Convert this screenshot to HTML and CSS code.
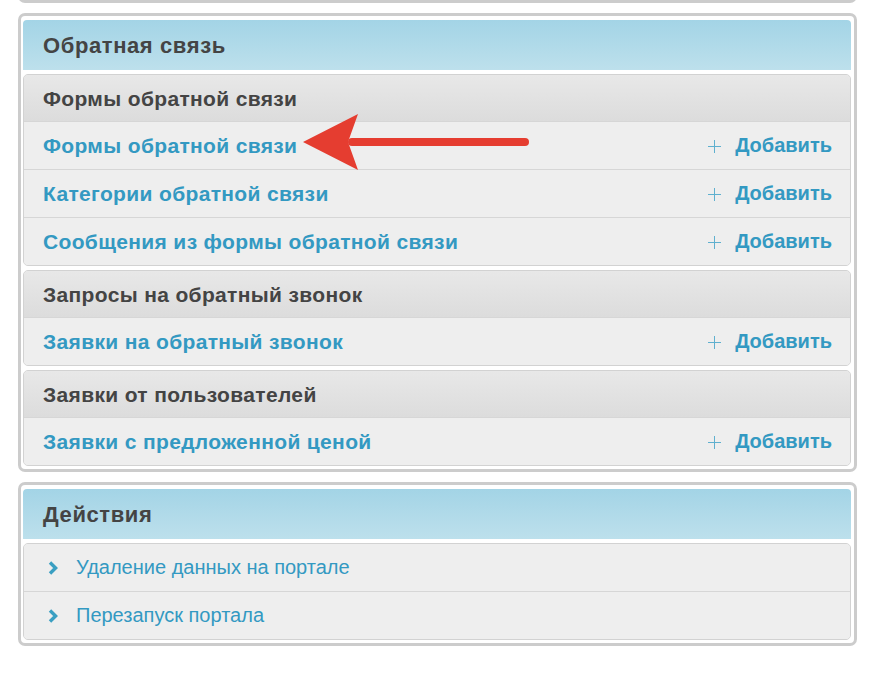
FILE: index.html
```html
<!DOCTYPE html>
<html lang="ru">
<head>
<meta charset="utf-8">
<title>Обратная связь</title>
<link rel="stylesheet" href="styles.css">
</head>
<body>
<div class="page">
  <div class="box box-prev"></div>

  <div class="box">
    <div class="box-title">Обратная связь</div>

    <div class="group">
      <div class="group-head">Формы обратной связи</div>
      <div class="row">
        <a class="row-link">Формы обратной связи</a>
        <a class="add"><span class="plus"></span>Добавить</a>
      </div>
      <div class="row">
        <a class="row-link">Категории обратной связи</a>
        <a class="add"><span class="plus"></span>Добавить</a>
      </div>
      <div class="row">
        <a class="row-link">Сообщения из формы обратной связи</a>
        <a class="add"><span class="plus"></span>Добавить</a>
      </div>
    </div>

    <div class="group">
      <div class="group-head">Запросы на обратный звонок</div>
      <div class="row">
        <a class="row-link">Заявки на обратный звонок</a>
        <a class="add"><span class="plus"></span>Добавить</a>
      </div>
    </div>

    <div class="group">
      <div class="group-head">Заявки от пользователей</div>
      <div class="row">
        <a class="row-link">Заявки с предложенной ценой</a>
        <a class="add"><span class="plus"></span>Добавить</a>
      </div>
    </div>
  </div>

  <div class="box">
    <div class="box-title">Действия</div>
    <div class="group">
      <div class="row action">
        <svg class="chev" width="10" height="14" viewBox="0 0 10 14"><path d="M2 1.5 L7.6 7 L2 12.5" fill="none" stroke="#3a9fc2" stroke-width="3.4"/></svg>
        <a class="action-link">Удаление данных на портале</a>
      </div>
      <div class="row action">
        <svg class="chev" width="10" height="14" viewBox="0 0 10 14"><path d="M2 1.5 L7.6 7 L2 12.5" fill="none" stroke="#3a9fc2" stroke-width="3.4"/></svg>
        <a class="action-link">Перезапуск портала</a>
      </div>
    </div>
  </div>

  <svg class="arrow" width="240" height="64" viewBox="0 0 240 64">
    <line x1="50" y1="30" x2="223" y2="30" stroke="#e53d30" stroke-width="8" stroke-linecap="round"/>
    <polygon points="1,30 56,2 46,30 56,58" fill="#e53d30"/>
  </svg>
</div>
</body>
</html>
```

FILE: styles.css
```css
html, body {
  margin: 0;
  padding: 0;
  background: #fff;
}

body {
  font-family: "Liberation Sans", Arial, sans-serif;
  color: #444;
}

.page {
  position: relative;
  padding: 3px 29px 40px 18px;
}

.box {
  border: 3px solid #cccccc;
  border-radius: 7px;
  padding: 4px 3px 3px 2px;
  margin-top: 10px;
  background: #fff;
}

.box-prev {
  height: 20px;
  margin-top: -26px;
  padding: 0;
}

.box-title {
  height: 50px;
  line-height: 52px;
  padding-left: 20px;
  font-size: 22px;
  letter-spacing: 0.6px;
  font-weight: bold;
  color: #444;
  border-radius: 4px 4px 0 0;
  background: linear-gradient(to bottom, #a3d4e6, #bde0ec);
}

.group {
  margin-top: 4px;
  border: 1px solid #d2d2d2;
  border-radius: 5px;
  background: #eeeeee;
  overflow: hidden;
}

.group-head {
  height: 46px;
  line-height: 48px;
  padding-left: 19px;
  font-size: 21px;
  letter-spacing: 0.35px;
  font-weight: bold;
  color: #444;
  background: linear-gradient(to bottom, #e8e8e8, #dcdcdc);
}

.row {
  height: 47px;
  border-top: 1px solid #d6d6d6;
  display: flex;
  align-items: center;
  padding: 0 18px 0 19px;
  background: #eeeeee;
}

.group > .row:first-child {
  border-top: none;
}

.row-link {
  flex: 1;
  font-size: 21px;
  letter-spacing: 0.35px;
  font-weight: bold;
  color: #3399c2;
}

.add {
  display: flex;
  align-items: center;
  font-size: 20px;
  font-weight: bold;
  color: #3399c2;
}

.plus {
  position: relative;
  width: 13px;
  height: 13px;
  margin-right: 14px;
  margin-top: 1px;
}

.plus::before,
.plus::after {
  content: "";
  position: absolute;
  background: #5fb0cf;
}

.plus::before {
  left: 0;
  top: 6px;
  width: 13px;
  height: 1.6px;
}

.plus::after {
  top: 0;
  left: 5.7px;
  width: 1.6px;
  height: 13px;
}

.action {
  padding-left: 24px;
}

.chev {
  margin-right: 18px;
  flex: none;
}

.action-link {
  font-size: 20px;
  color: #3399c2;
}

.arrow {
  position: absolute;
  left: 302px;
  top: 112px;
}
```
